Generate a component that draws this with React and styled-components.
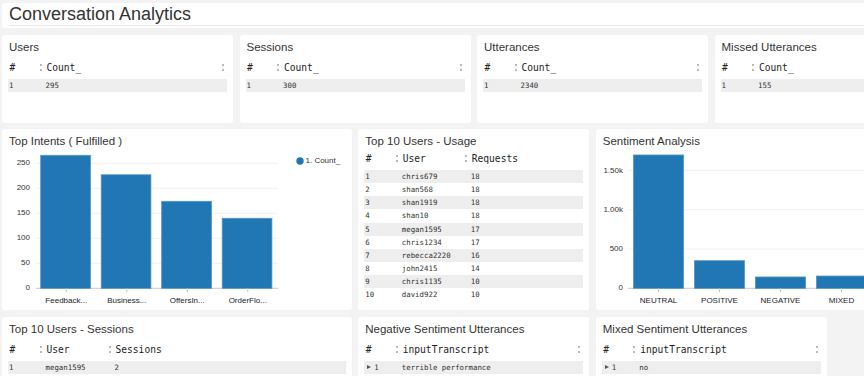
import React from 'react';
import styled, { createGlobalStyle } from 'styled-components';

const Global = createGlobalStyle`
  html, body { margin: 0; padding: 0; background: #f3f3f3; overflow: hidden; }
  body { font-family: "Liberation Sans", Arial, sans-serif; color: #333; }
`;

const Board = styled.div`
  display: grid;
  grid-template-columns: repeat(8, 112.25px);
  grid-template-rows: 25px 88px 181px 120px;
  column-gap: 6.5px;
  row-gap: 6.5px;
  padding: 3px 0 0 2px;
  width: 944px;
`;

const TitleCard = styled.header`
  grid-column: 1 / -1;
  background: #fff;
  border-radius: 3px;
  padding: 0 0 0 7px;
`;

const PageTitle = styled.h1`
  margin: 0;
  font-size: 18px;
  line-height: 22px;
  font-weight: normal;
  color: #333;
  border-bottom: 1px solid #e8e8e8;
`;

const Card = styled.section`
  grid-column: span ${p => p.$span};
  background: #fff;
  border-radius: 3px;
  display: flex;
  flex-direction: column;
  overflow: hidden;
  min-width: 0;
`;

const CardTitle = styled.h2`
  margin: 0;
  padding: 5px 7px 0;
  font-size: 11.5px;
  line-height: 14px;
  font-weight: normal;
  color: #333;
  white-space: nowrap;
`;

const Table = styled.div`
  margin: ${p => p.$mt}px 6px 0;
  font-family: "DejaVu Sans Mono", "Liberation Mono", monospace;
`;

const HeadRow = styled.div`
  display: grid;
  grid-template-columns: ${p => p.$cols};
  height: 17px;
  align-items: center;
  margin-bottom: 3px;
  font-size: 9.6px;
  color: #222;
`;

const HeadCell = styled.div`
  display: flex;
  align-items: center;
  padding-left: ${p => (p.$first ? 1.5 : 0)}px;
  white-space: nowrap;
`;

const Grip = styled.span`
  display: inline-block;
  width: 0;
  height: 7px;
  border-left: 2px dotted #b8b8b8;
  margin-right: 5px;
  margin-left: ${p => (p.$end ? 'auto' : '0')};
  ${p => (p.$end ? 'margin-right: 3px;' : '')}
`;

const DataRow = styled.div`
  display: grid;
  grid-template-columns: ${p => p.$cols};
  height: 13.15px;
  align-items: center;
  font-size: 7.4px;
  color: #333;
  background: ${p => (p.$shade ? '#eeeeee' : 'transparent')};
`;

const Cell = styled.div`
  display: flex;
  align-items: center;
  padding-left: ${p => (p.$first ? 1 : 6)}px;
  white-space: nowrap;
`;

const Caret = styled.span`
  display: inline-block;
  width: 0;
  height: 0;
  border-left: 4px solid #555;
  border-top: 2.5px solid transparent;
  border-bottom: 2.5px solid transparent;
  margin: 0 3px 0 2px;
`;

const ChartSvg = styled.svg`
  display: block;
  font-family: "Liberation Sans", Arial, sans-serif;
`;

function DataTable({ cols, headers, rows, mt, endGrip, caret }) {
  return (
    <Table $mt={mt}>
      <HeadRow $cols={cols}>
        {headers.map((h, i) => (
          <HeadCell key={h} $first={i === 0}>
            {i > 0 && <Grip />}
            {h}
            {endGrip && i === headers.length - 1 && <Grip $end />}
          </HeadCell>
        ))}
      </HeadRow>
      {rows.map((r, ri) => (
        <DataRow key={ri} $cols={cols} $shade={ri % 2 === 0}>
          {r.map((c, ci) => (
            <Cell key={ci} $first={ci === 0}>
              {ci === 0 && caret && <Caret />}
              {c}
            </Cell>
          ))}
        </DataRow>
      ))}
    </Table>
  );
}

function BarChart({ data, ticks, unit, y0, axisLeft, axisRight, bandStart, band, inset, barW, labelX, legend }) {
  return (
    <ChartSvg width="350" height="162">
      {ticks.map(t => {
        const y = y0 - t.v * unit;
        return (
          <g key={t.v}>
            <line x1={axisLeft} x2={axisRight} y1={y} y2={y} stroke={t.v === 0 ? '#c8c8c8' : '#f0f0f0'} strokeWidth="1" />
            <text x={labelX} y={y} fontSize="8" fill="#333" textAnchor="end" dominantBaseline="middle">{t.label}</text>
          </g>
        );
      })}
      {data.map((d, i) => {
        const x = bandStart + band * i;
        const h = d.value * unit;
        const cx = x + band / 2;
        return (
          <g key={d.label}>
            <rect x={x + inset} y={y0 - h} width={barW} height={h} fill="#2077b4" stroke="#4d93c6" strokeWidth="0.8" />
            <line x1={cx} x2={cx} y1={y0} y2={y0 + 4} stroke="#c8c8c8" />
            <text x={cx} y={y0 + 12.5} fontSize="8" fill="#222" textAnchor="middle" dominantBaseline="middle">{d.label}</text>
          </g>
        );
      })}
      {legend && (
        <g>
          <circle cx="298" cy="13" r="3.7" fill="#2077b4" />
          <text x="303.5" y="13" fontSize="8" fill="#333" dominantBaseline="middle">{legend}</text>
        </g>
      )}
    </ChartSvg>
  );
}

const counts = [
  ['Users', '295'],
  ['Sessions', '300'],
  ['Utterances', '2340'],
  ['Missed Utterances', '155'],
];

const usage = [
  ['chris679', 18], ['shan568', 18], ['shan1919', 18], ['shan10', 18], ['megan1595', 17],
  ['chris1234', 17], ['rebecca2220', 16], ['john2415', 14], ['chris1135', 10], ['david922', 10],
];

export default function App() {
  return (
    <>
      <Global />
      <Board>
        <TitleCard>
          <PageTitle>Conversation Analytics</PageTitle>
        </TitleCard>

        {counts.map(([title, value]) => (
          <Card key={title} $span={2}>
            <CardTitle>{title}</CardTitle>
            <DataTable mt={5} cols="31.5px 1fr" headers={['#', 'Count_']} rows={[['1', value]]} endGrip />
          </Card>
        ))}

        <Card $span={3}>
          <CardTitle>Top Intents ( Fulfilled )</CardTitle>
          <BarChart
            data={[
              { label: 'Feedback...', value: 266 },
              { label: 'Business...', value: 227 },
              { label: 'OffersIn...', value: 174 },
              { label: 'OrderFlo...', value: 140 },
            ]}
            ticks={[0, 50, 100, 150, 200, 250].map(v => ({ v, label: String(v) }))}
            unit={0.5}
            y0={140.3}
            axisLeft={34}
            axisRight={276}
            bandStart={34}
            band={60.5}
            inset={4.7}
            barW={49.7}
            labelX={28}
            legend="1. Count_"
          />
        </Card>

        <Card $span={2}>
          <CardTitle>Top 10 Users - Usage</CardTitle>
          <DataTable
            mt={2}
            cols="31.5px 69px 1fr"
            headers={['#', 'User', 'Requests']}
            rows={usage.map((u, i) => [String(i + 1), u[0], String(u[1])])}
          />
        </Card>

        <Card $span={3}>
          <CardTitle>Sentiment Analysis</CardTitle>
          <BarChart
            data={[
              { label: 'NEUTRAL', value: 1696 },
              { label: 'POSITIVE', value: 351 },
              { label: 'NEGATIVE', value: 144 },
              { label: 'MIXED', value: 156 },
            ]}
            ticks={[
              { v: 0, label: '0' },
              { v: 500, label: '500' },
              { v: 1000, label: '1.00k' },
              { v: 1500, label: '1.50k' },
            ]}
            unit={0.0786}
            y0={140.3}
            axisLeft={32}
            axisRight={276}
            bandStart={32}
            band={61}
            inset={5.5}
            barW={50}
            labelX={27}
          />
        </Card>

        <Card $span={3}>
          <CardTitle>Top 10 Users - Sessions</CardTitle>
          <DataTable mt={5} cols="31.5px 69px 1fr" headers={['#', 'User', 'Sessions']} rows={[['1', 'megan1595', '2']]} />
        </Card>

        <Card $span={2}>
          <CardTitle>Negative Sentiment Utterances</CardTitle>
          <DataTable mt={5} cols="31.5px 1fr" headers={['#', 'inputTranscript']} rows={[['1', 'terrible performance']]} endGrip caret />
        </Card>

        <Card $span={2}>
          <CardTitle>Mixed Sentiment Utterances</CardTitle>
          <DataTable mt={5} cols="31.5px 1fr" headers={['#', 'inputTranscript']} rows={[['1', 'no']]} endGrip caret />
        </Card>
      </Board>
    </>
  );
}
